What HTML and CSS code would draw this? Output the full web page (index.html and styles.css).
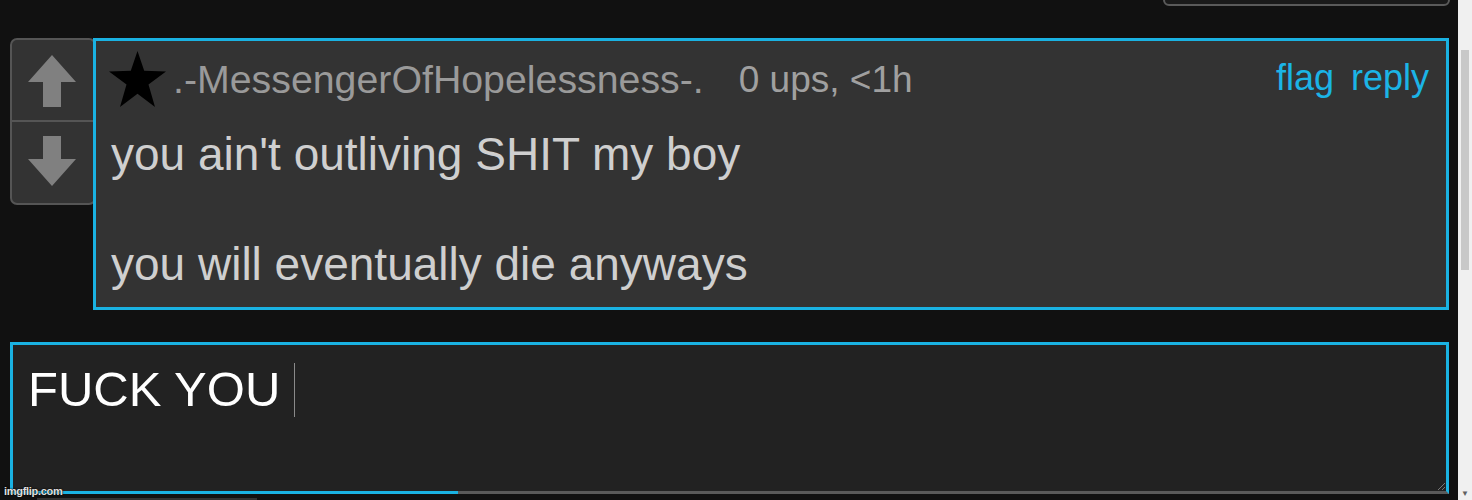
FILE: index.html
```html
<!DOCTYPE html>
<html>
<head>
<meta charset="utf-8">
<link rel="stylesheet" href="styles.css">
</head>
<body>
<div class="page">
  <main class="main">
    <div class="topbar"><div class="topbox"></div></div>
    <div class="row">
      <div class="votes">
        <div class="vote up">
          <svg width="48" height="52" viewBox="0 0 48 52"><polygon points="24,0 48,27 33,27 33,52 15,52 15,27 0,27" fill="#808080"/></svg>
        </div>
        <div class="vote down">
          <svg width="48" height="52" viewBox="0 0 48 52"><polygon points="15,0 33,0 33,23 48,23 24,50 0,23 15,23" fill="#808080"/></svg>
        </div>
      </div>
      <div class="comment">
        <div class="c-head">
          <svg class="star" width="57" height="57" viewBox="0 0 56 56"><polygon points="28,0 34.6,19.5 56,20.2 38.8,32.8 45.2,55 28,42 10.8,55 17.2,32.8 0,20.2 21.4,19.5" fill="#000"/></svg>
          <span class="user">.-MessengerOfHopelessness-.</span>
          <span class="meta">0 ups, &lt;1h</span>
          <span class="links"><span class="link">flag</span><span class="link">reply</span></span>
        </div>
        <div class="c-body">
          <div class="line">you ain't outliving SHIT my boy</div>
          <div class="line blank"></div>
          <div class="line">you will eventually die anyways</div>
        </div>
      </div>
    </div>
    <div class="reply">
      <div class="reply-text">FUCK YOU<span class="caret"></span></div>
      <div class="grip"></div>
    </div>
    <div class="under"><div class="under-bar"></div></div>
    <div class="watermark">imgflip.com</div>
  </main>
  <aside class="scroll">
    <div class="thumb"></div>
    <div class="sarrow">&#9660;</div>
  </aside>
</div>
</body>
</html>
```
FILE: styles.css
```css
*, *::before, *::after { box-sizing: border-box; }
html, body {
  margin: 0;
  padding: 0;
  background: #111;
  height: 500px;
  overflow: hidden;
}
.page {
  display: flex;
  height: 500px;
  font-family: "Liberation Sans", Arial, sans-serif;
}
.main {
  position: relative;
  flex: 1;
  background: #111;
  padding: 0 9px 0 10px;
  display: flex;
  flex-direction: column;
}
.topbar {
  height: 38px;
  flex-shrink: 0;
  display: flex;
  justify-content: flex-end;
}
.topbox {
  width: 287px;
  height: 44px;
  margin-top: -38px;
  margin-right: -1px;
  border: 2px solid #5a5a5a;
  border-radius: 6px;
  background: #1a1a1a;
}
.row {
  display: flex;
  align-items: flex-start;
  flex-shrink: 0;
}
.votes {
  width: 86px;
  height: 167px;
  margin-right: -3px;
  border: 2px solid #555;
  border-radius: 7px;
  background: #333;
  display: flex;
  flex-direction: column;
  flex-shrink: 0;
}
.vote {
  flex: 1;
  display: flex;
  align-items: center;
  justify-content: center;
  padding-right: 2px;
}
.vote.up { border-bottom: 2px solid #555; padding-top: 1px; }
.vote.down { padding-bottom: 2px; }
.comment {
  position: relative;
  flex: 1;
  height: 272px;
  border: 3px solid #1ab2e2;
  background: #333;
  padding: 11px 17px 0 15px;
  z-index: 1;
}
.c-head {
  display: flex;
  align-items: center;
  height: 55px;
  white-space: nowrap;
}
.star { flex-shrink: 0; margin-left: -2px; }
.user {
  margin-left: 7px;
  font-size: 39.3px;
  line-height: 55px;
  color: #9a9a9a;
}
.meta {
  margin-left: 35px;
  font-size: 37px;
  line-height: 55px;
  color: #a0a0a0;
}
.links {
  margin-left: auto;
  display: flex;
  gap: 17px;
  margin-top: -4px;
}
.link {
  font-size: 36px;
  line-height: 55px;
  color: #1bb4e6;
}
.c-body {
  margin-top: 20px;
  color: #cfcfcf;
  font-size: 46px;
}
.line {
  height: 55px;
  line-height: 55px;
  white-space: nowrap;
}
.reply {
  position: relative;
  flex-shrink: 0;
  margin-top: 32px;
  height: 152px;
  border: 3px solid #1ab2e2;
  border-bottom-color: #5a5a5a;
  background: #222;
  padding: 17px 15px 0 15px;
}
.reply::after {
  content: "";
  position: absolute;
  left: -3px;
  bottom: -3px;
  width: 448px;
  height: 3px;
  background: #1ab2e2;
}
.reply-text {
  color: #fff;
  font-size: 49px;
  line-height: 55px;
  display: flex;
  align-items: center;
}
.caret {
  display: inline-block;
  width: 1px;
  height: 54px;
  background: #8a8a8a;
  margin-left: 14px;
}
.grip {
  position: absolute;
  right: 1px;
  bottom: 1px;
  width: 7px;
  height: 7px;
  background: linear-gradient(135deg, transparent 45%, #777 45%, #777 55%, transparent 55%, transparent 75%, #777 75%, #777 85%, transparent 85%);
}
.under {
  height: 6px;
  flex-shrink: 0;
  display: flex;
  align-items: flex-end;
}
.under-bar {
  margin-left: 27px;
  width: 220px;
  height: 2px;
  background: #333;
}
.watermark {
  position: absolute;
  left: 4px;
  bottom: 3px;
  font-size: 11px;
  font-weight: bold;
  letter-spacing: -0.3px;
  color: #e0e0e0;
  text-shadow: 0 0 2px #000, 0 0 1px #000;
}
.scroll {
  position: relative;
  width: 14px;
  background: #f0f0f0;
  flex-shrink: 0;
}
.thumb {
  position: absolute;
  left: 3px;
  right: 3px;
  top: 50px;
  height: 220px;
  background: #c8c8c8;
}
.sarrow {
  position: absolute;
  left: 0;
  right: 0;
  bottom: 2px;
  text-align: center;
  font-size: 8px;
  color: #606060;
}
```
